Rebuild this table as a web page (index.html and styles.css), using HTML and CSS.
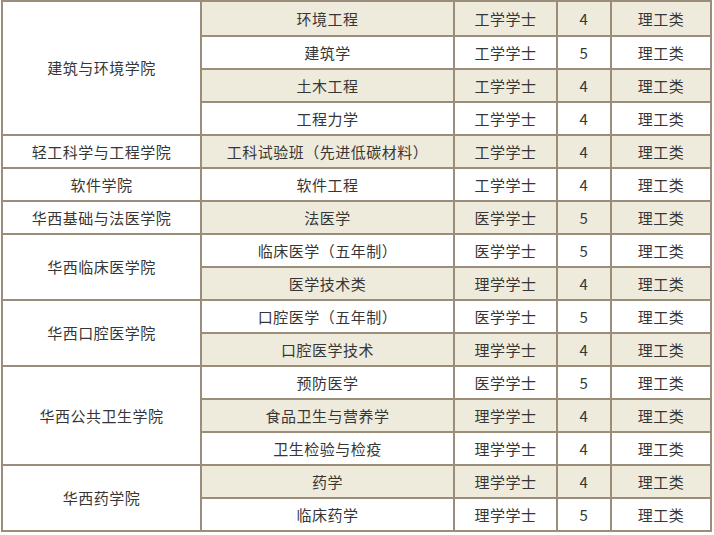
FILE: index.html
```html
<!DOCTYPE html>
<html lang="zh-CN">
<head>
<meta charset="utf-8">
<link rel="stylesheet" href="styles.css">
</head>
<body>
<table class="majors">
  <colgroup>
    <col class="c-college">
    <col class="c-major">
    <col class="c-degree">
    <col class="c-years">
    <col class="c-cat">
  </colgroup>
  <tbody>
    <tr class="shade first">
      <td class="college" rowspan="4">建筑与环境学院</td>
      <td>环境工程</td><td>工学学士</td><td>4</td><td>理工类</td>
    </tr>
    <tr><td>建筑学</td><td>工学学士</td><td>5</td><td>理工类</td></tr>
    <tr class="shade"><td>土木工程</td><td>工学学士</td><td>4</td><td>理工类</td></tr>
    <tr><td>工程力学</td><td>工学学士</td><td>4</td><td>理工类</td></tr>
    <tr class="shade">
      <td class="college">轻工科学与工程学院</td>
      <td>工科试验班（先进低碳材料）</td><td>工学学士</td><td>4</td><td>理工类</td>
    </tr>
    <tr>
      <td class="college">软件学院</td>
      <td>软件工程</td><td>工学学士</td><td>4</td><td>理工类</td>
    </tr>
    <tr class="shade">
      <td class="college">华西基础与法医学院</td>
      <td>法医学</td><td>医学学士</td><td>5</td><td>理工类</td>
    </tr>
    <tr>
      <td class="college" rowspan="2">华西临床医学院</td>
      <td>临床医学（五年制）</td><td>医学学士</td><td>5</td><td>理工类</td>
    </tr>
    <tr class="shade"><td>医学技术类</td><td>理学学士</td><td>4</td><td>理工类</td></tr>
    <tr>
      <td class="college" rowspan="2">华西口腔医学院</td>
      <td>口腔医学（五年制）</td><td>医学学士</td><td>5</td><td>理工类</td>
    </tr>
    <tr class="shade"><td>口腔医学技术</td><td>理学学士</td><td>4</td><td>理工类</td></tr>
    <tr>
      <td class="college" rowspan="3">华西公共卫生学院</td>
      <td>预防医学</td><td>医学学士</td><td>5</td><td>理工类</td>
    </tr>
    <tr class="shade"><td>食品卫生与营养学</td><td>理学学士</td><td>4</td><td>理工类</td></tr>
    <tr><td>卫生检验与检疫</td><td>理学学士</td><td>4</td><td>理工类</td></tr>
    <tr class="shade">
      <td class="college" rowspan="2">华西药学院</td>
      <td>药学</td><td>理学学士</td><td>4</td><td>理工类</td>
    </tr>
    <tr><td>临床药学</td><td>理学学士</td><td>5</td><td>理工类</td></tr>
  </tbody>
</table>
</body>
</html>
```
FILE: styles.css
```css
html, body {
  margin: 0;
  padding: 0;
  background: #ffffff;
}

.majors {
  border-collapse: collapse;
  table-layout: fixed;
  width: 710px;
  margin-left: 1px;
  font-family: "Noto Sans CJK SC", "Noto Sans", sans-serif;
  font-size: 15px;
  letter-spacing: 0.5px;
  color: #363636;
}

.c-college { width: 199px; }
.c-major { width: 253px; }
.c-degree { width: 103px; }
.c-years { width: 54px; }
.c-cat { width: 100px; }

.majors td {
  border: 2px solid #9a8d7a;
  height: 31px;
  padding: 0;
  text-align: center;
  vertical-align: middle;
  background: #ffffff;
  line-height: 20px;
  white-space: nowrap;
}

.majors tr.shade td {
  background: #efebdc;
}

.majors tr.shade td.college {
  background: #ffffff;
}

.majors tr.first td {
  height: 33px;
}
```
